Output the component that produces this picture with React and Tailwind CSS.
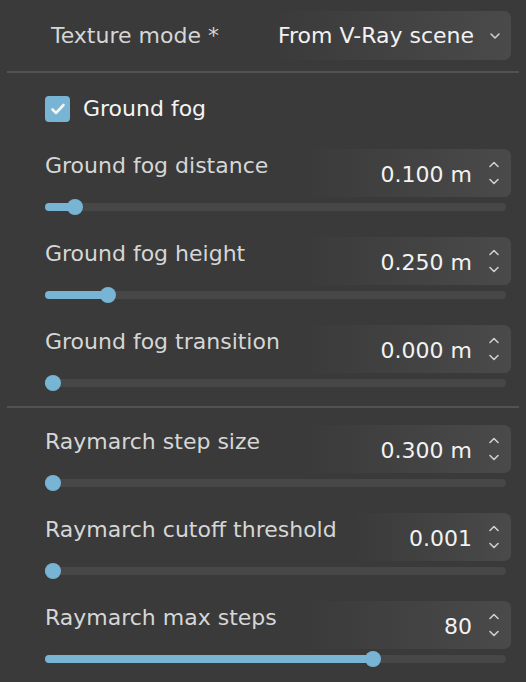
import React from 'react';

const font = { fontFamily: '"DejaVu Sans", "Noto Sans", sans-serif' };

function Spinner() {
  return (
    <svg width="12" height="30" viewBox="0 0 12 30" fill="none" stroke="#cfcfcf" strokeWidth="1.6" strokeLinecap="round" strokeLinejoin="round">
      <path d="M2 8.5l4-4 4 4" />
      <path d="M2 21.5l4 4 4-4" />
    </svg>
  );
}

function SliderRow({ label, value, pct, valueWidth = 'w-[211px]' }) {
  return (
    <div className="flex flex-col">
      <div className="flex items-start justify-between">
        <div className="pt-[3px] text-[22px] text-[#d6d6d6] leading-[28px]">{label}</div>
        <div className={`${valueWidth} h-[48px] rounded-[7px] bg-gradient-to-r from-[#3a3a3a] to-[#4a4a4a] flex items-center justify-end pr-[11px]`}>
          <span className="text-[22px] text-[#f2f2f2] mt-[2px] mr-[16px]">{value}</span>
          <Spinner />
        </div>
      </div>
      <div className="relative mt-[6px] h-[8px] w-[461px] rounded-full bg-[#474747]">
        <div className="absolute left-0 top-0 h-[8px] rounded-full bg-[#78b4d3]" style={{ width: `calc(8px + ${pct} * 445px)` }} />
        <div className="absolute top-[-4px] h-[16px] w-[16px] rounded-full bg-[#78b4d3]" style={{ left: `calc(${pct} * 445px)` }} />
      </div>
    </div>
  );
}

export default function App() {
  return (
    <div className="w-[526px] h-[682px] bg-[#3a3a3a] overflow-hidden" style={font}>
      {/* Texture mode */}
      <div className="pt-[11px] flex items-center justify-between pr-[15px]">
        <div className="pl-[51px] text-[22px] text-[#d6d6d6] leading-[28px]">Texture mode *</div>
        <div className="w-[241px] h-[49px] rounded-[7px] bg-gradient-to-r from-[#3a3a3a] to-[#4a4a4a] flex items-center pl-[8px] pr-[10px] justify-between">
          <span className="text-[22px] text-[#f2f2f2]">From V-Ray scene</span>
          <svg width="12" height="10" viewBox="0 0 12 10" fill="none" stroke="#cfcfcf" strokeWidth="1.6" strokeLinecap="round" strokeLinejoin="round">
            <path d="M2 3l4 4 4-4" />
          </svg>
        </div>
      </div>
      <div className="mt-[11px] mx-[7px] h-[2px] bg-[#525252]" />

      <div className="pl-[45px] pr-[15px]">
        {/* Ground fog checkbox */}
        <div className="mt-[22px] flex items-center gap-[13px]">
          <div className="w-[25px] h-[26px] rounded-[4px] bg-[#78b4d3] flex items-center justify-center">
            <svg width="16" height="14" viewBox="0 0 16 14" fill="none" stroke="#f4f4f4" strokeWidth="2.6" strokeLinecap="round" strokeLinejoin="round">
              <path d="M2.5 7.5l3.5 3.5 7.5-8" />
            </svg>
          </div>
          <span className="text-[22px] text-[#f4f4f4] leading-[28px]">Ground fog</span>
        </div>

        <div className="mt-[26px] flex flex-col gap-[26px]">
          <SliderRow label="Ground fog distance" value="0.100 m" pct={0.05} />
          <SliderRow label="Ground fog height" value="0.250 m" pct={0.124} />
          <SliderRow label="Ground fog transition" value="0.000 m" pct={0} />
        </div>
      </div>

      <div className="mt-[19px] mx-[7px] h-[2px] bg-[#525252]" />

      <div className="pl-[45px] pr-[15px]">
        <div className="mt-[17px] flex flex-col gap-[26px]">
          <SliderRow label="Raymarch step size" value="0.300 m" pct={0} />
          <SliderRow label="Raymarch cutoff threshold" value="0.001" pct={0} valueWidth="w-[160px]" />
          <SliderRow label="Raymarch max steps" value="80" pct={0.72} />
        </div>
      </div>
    </div>
  );
}
